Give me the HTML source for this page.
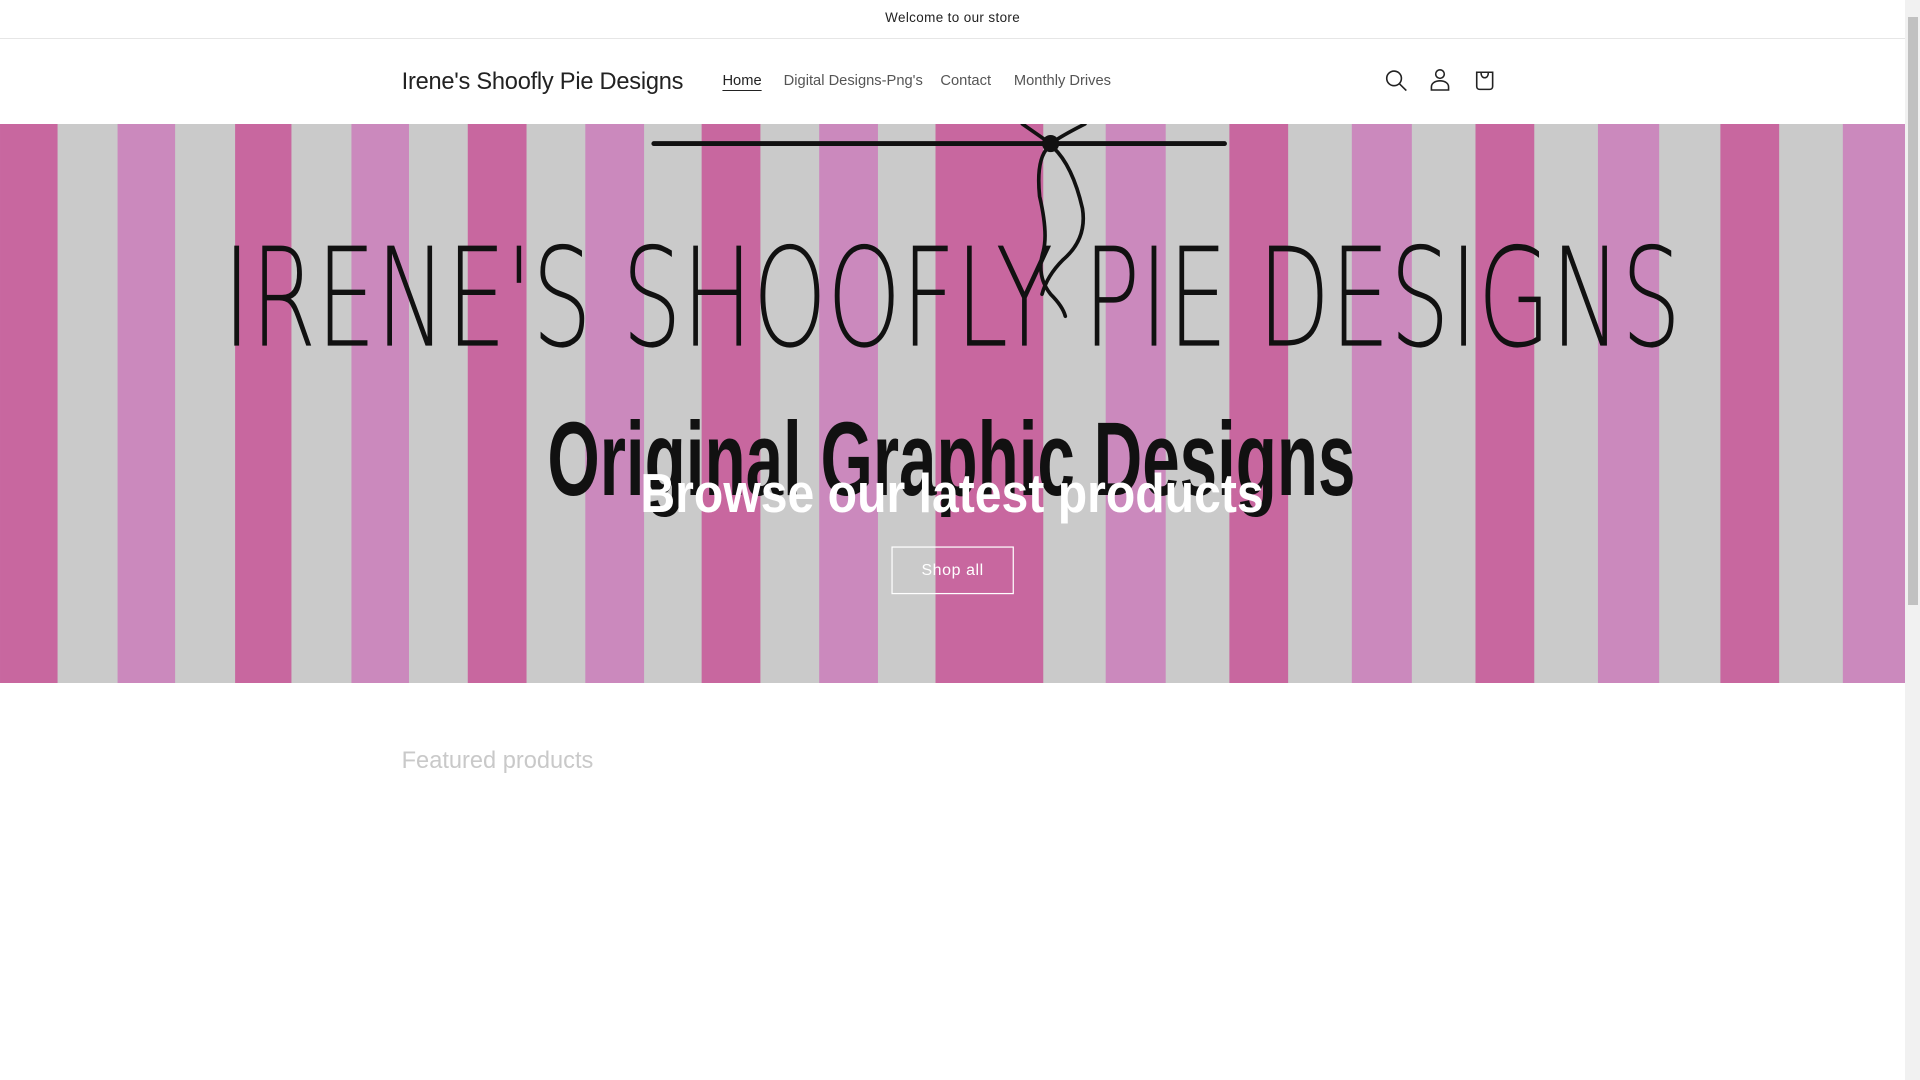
<!DOCTYPE html>
<html><head><meta charset="utf-8">
<style>
html,body{margin:0;padding:0;overflow:hidden;background:#fff}
body{zoom:1.2244898;width:1568px;height:882px;position:relative;font-family:"Liberation Sans",sans-serif;color:#121212}
.ann{position:absolute;left:0;top:0;width:1556px;height:31px;border-bottom:1px solid #e6e6e6;text-align:center;font-size:11px;line-height:29px;letter-spacing:.3px;color:#222}
.logo{position:absolute;left:328px;top:56px;font-size:19.3px;letter-spacing:-.2px;color:#222;white-space:nowrap}
.nav{position:absolute;top:60px;font-size:12px;color:#555;white-space:nowrap}
.sb{position:absolute;left:1556px;top:0;width:12px;height:882px;background:#f1f1f1}
.thumb{position:absolute;left:1558px;top:14px;width:8px;height:480px;background:#c1c1c1;border-radius:0}
.feat{position:absolute;left:328px;top:611px;font-size:19.3px;color:#c9c9c9;white-space:nowrap}
</style></head><body>
<div class="ann">Welcome to our store</div>
<div class="logo">Irene's Shoofly Pie Designs</div>
<div class="nav" style="left:590px;color:#222;text-decoration:underline;text-underline-offset:4px">Home</div>
<div class="nav" style="left:640px">Digital Designs-Png's</div>
<div class="nav" style="left:768px">Contact</div>
<div class="nav" style="left:828px">Monthly Drives</div>
<svg style="position:absolute;left:0;top:0" width="1556" height="101" viewBox="0 0 1556 101" fill="none" stroke="#222" stroke-width="1.3">
<circle cx="1138.5" cy="64" r="6"/><path d="M1143 68.5l5.5 5.5"/>
<circle cx="1176" cy="60.5" r="3.5"/><path d="M1169 73.5h14v-2.5c0-3-3-5-7-5s-7 2-7 5z"/>
<path d="M1206 59h13v11.5c0 1.5-1 2.5-2.5 2.5h-8c-1.5 0-2.5-1-2.5-2.5z"/><path d="M1209.5 59c0 3 1.3 4.5 3 4.5s3-1.5 3-4.5"/>
</svg>
<svg style="position:absolute;left:0;top:101px" width="1556" height="457" viewBox="0 101 1556 457">
<g>
<rect x="0" y="101" width="1556" height="457" fill="#cacaca"/>
<g fill="#c8679f">
<rect x="0" y="101" width="47" height="457"/><rect x="192" y="101" width="46" height="457"/><rect x="382" y="101" width="48" height="457"/><rect x="573" y="101" width="48" height="457"/><rect x="764" y="101" width="88" height="457"/><rect x="1004" y="101" width="48" height="457"/><rect x="1205" y="101" width="48" height="457"/><rect x="1405" y="101" width="48" height="457"/>
</g>
<g fill="#cb89bd">
<rect x="96" y="101" width="47" height="457"/><rect x="287" y="101" width="47" height="457"/><rect x="478" y="101" width="48" height="457"/><rect x="669" y="101" width="48" height="457"/><rect x="903" y="101" width="49" height="457"/><rect x="1104" y="101" width="49" height="457"/><rect x="1305" y="101" width="50" height="457"/><rect x="1505" y="101" width="51" height="457"/>
</g>
</g>
<g stroke="#111" fill="none" stroke-linecap="round">
<path d="M534 117H1000" stroke-width="4"/>
<path d="M835 101Q848 110 858 117M886 101Q868 110 858 117" stroke-width="3"/>
<path d="M856 120Q846 130 849 160Q856 190 852 205Q846 225 858 240Q868 250 870 258" stroke-width="3"/>
<path d="M860 120Q876 135 884 170Q888 195 868 212Q855 225 851 240" stroke-width="3"/>
</g>
<circle cx="858" cy="117" r="7" fill="#111"/>
<text x="182" y="282" textLength="1191" lengthAdjust="spacingAndGlyphs" font-family="'DejaVu Sans ExtraLight','DejaVu Sans','Liberation Sans',sans-serif" font-weight="200" font-size="112" fill="#111">IRENE'S SHOOFLY PIE DESIGNS</text>
<text x="447" y="404" textLength="660" lengthAdjust="spacingAndGlyphs" font-family="'Liberation Sans',sans-serif" font-weight="bold" font-size="86" fill="#111">Original Graphic Designs</text>
<text x="523" y="418" textLength="509" lengthAdjust="spacingAndGlyphs" font-family="'Liberation Sans',sans-serif" font-weight="bold" font-size="45" fill="#fff">Browse our latest products</text>
<rect x="728.5" y="446.5" width="99" height="38" fill="none" stroke="#fff" stroke-width="1"/>
<text x="778" y="469.5" text-anchor="middle" font-family="'Liberation Sans',sans-serif" font-size="13" fill="#fff" letter-spacing=".5">Shop all</text>
</svg>
<div class="feat">Featured products</div>
<div class="sb"></div><div class="thumb"></div>
</body></html>
